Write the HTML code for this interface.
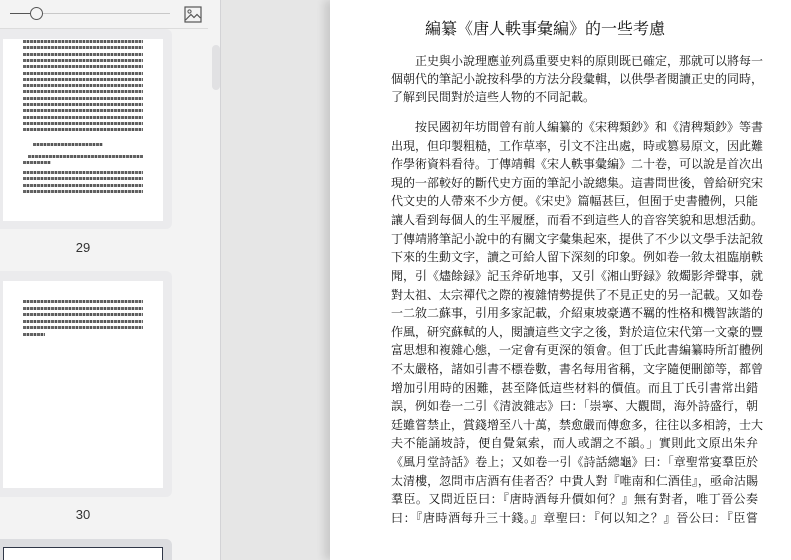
<!DOCTYPE html>
<html><head><meta charset="utf-8"><style>
*{margin:0;padding:0;box-sizing:border-box}
html{width:791px;height:560px;overflow:hidden}
body{width:791px;height:560px;overflow:hidden;background:#e6e6e6;position:relative;font-family:"Liberation Serif","Noto Serif CJK SC","Noto Serif CJK TC",serif}
.side{position:absolute;left:0;top:0;width:221px;height:560px;background:#f3f3f3;border-right:1px solid #d3d3d6;overflow:hidden}
.card{position:absolute;left:0;width:172px;background:#ebebed;border-radius:0 6px 6px 0}
.pg{position:absolute;left:3px;width:160px;background:#fff}
.tl{position:absolute;height:3px;background:repeating-linear-gradient(90deg,#666 0 3px,#bbb 3px 4px,#555 4px 6px,#ccc 6px 7px)}
.lab{position:absolute;width:166px;text-align:center;font:13px "Liberation Sans",sans-serif;color:#333}
.page{position:absolute;left:330px;top:0;width:461px;height:560px;background:#fff;box-shadow:-6px 0 8px rgba(0,0,0,.12)}
.t{position:absolute;left:391px;width:367px;height:19px;font-size:12px;line-height:19px;color:#111;text-align:justify;text-align-last:justify;white-space:nowrap}
</style></head><body>
<div class="side">
 <div style="position:absolute;left:10px;top:13px;width:160px;height:1px;background:#c8c8c8"></div>
 <div style="position:absolute;left:10px;top:13px;width:22px;height:1px;background:#555"></div>
 <div style="position:absolute;left:30px;top:7px;width:13px;height:13px;border:1.5px solid #555;border-radius:50%;background:#f3f3f3"></div>
 <svg style="position:absolute;left:184px;top:6px" width="18" height="17" viewBox="0 0 18 17"><rect x="1" y="1" width="16" height="15" fill="none" stroke="#555" stroke-width="1.2"/><circle cx="5.5" cy="5.5" r="1.6" fill="none" stroke="#555"/><path d="M1.5 14 L7 8.5 L10 11.5 L13 8.5 L16.5 12" fill="none" stroke="#555" stroke-width="1.2"/></svg>
 <div style="position:absolute;left:0;top:28px;width:208px;height:1px;background:#dcdcdc"></div>
 <div style="position:absolute;left:212px;top:45px;width:8px;height:45px;border-radius:4px;background:#e1e1e3"></div>
 <div class="card" style="top:29px;height:200px"><div class="pg" style="top:10px;height:182px"></div></div>
 <div class="lab" style="top:240px">29</div>
 <div class="card" style="top:271px;height:226px"><div class="pg" style="top:10px;height:207px"></div></div>
 <div class="lab" style="top:507px">30</div>
 <div class="card" style="top:539px;height:30px;background:#dcdde0"><div class="pg" style="top:8px;height:40px;border:1.5px solid #2f3747"></div></div>
 <div id="th"></div>
</div>
<div class="page"></div>
<div style="position:absolute;left:330px;top:18px;width:430px;text-align:center;font-size:16px;line-height:24px;color:#111">編纂《唐人軼事彙編》的一些考慮</div>
<div class="t" style="top:52px;padding-left:24px">正史與小說理應並列爲重要史料的原則既已確定，那就可以將每一</div>
<div class="t" style="top:70px">個朝代的筆記小說按科學的方法分段彙輯，以供學者閱讀正史的同時，</div>
<div class="t" style="top:88px;text-align-last:left">了解到民間對於這些人物的不同記載。</div>
<div class="t" style="top:118px;padding-left:24px">按民國初年坊間曾有前人編纂的《宋稗類鈔》和《清稗類鈔》等書</div>
<div class="t" style="top:137px">出現，但印製粗糙，工作草率，引文不注出處，時或篡易原文，因此難</div>
<div class="t" style="top:155px">作學術資料看待。丁傳靖輯《宋人軼事彙編》二十卷，可以說是首次出</div>
<div class="t" style="top:174px">現的一部較好的斷代史方面的筆記小說總集。這書問世後，曾給研究宋</div>
<div class="t" style="top:192px">代文史的人帶來不少方便。《宋史》篇幅甚巨，但囿于史書體例，只能</div>
<div class="t" style="top:211px">讓人看到每個人的生平履歷，而看不到這些人的音容笑貌和思想活動。</div>
<div class="t" style="top:230px">丁傳靖將筆記小說中的有關文字彙集起來，提供了不少以文學手法記敘</div>
<div class="t" style="top:248px">下來的生動文字，讀之可給人留下深刻的印象。例如卷一敘太祖臨崩軼</div>
<div class="t" style="top:267px">聞，引《燼餘録》記玉斧斫地事，又引《湘山野録》敘燭影斧聲事，就</div>
<div class="t" style="top:286px">對太祖、太宗禪代之際的複雜情勢提供了不見正史的另一記載。又如卷</div>
<div class="t" style="top:304px">一二敘二蘇事，引用多家記載，介紹東坡豪邁不羈的性格和機智詼諧的</div>
<div class="t" style="top:323px">作風，研究蘇軾的人，閱讀這些文字之後，對於這位宋代第一文豪的豐</div>
<div class="t" style="top:341px">富思想和複雜心態，一定會有更深的領會。但丁氏此書編纂時所訂體例</div>
<div class="t" style="top:360px">不太嚴格，諸如引書不標卷數，書名每用省稱，文字隨便刪節等，都曾</div>
<div class="t" style="top:379px">增加引用時的困難，甚至降低這些材料的價值。而且丁氏引書常出錯</div>
<div class="t" style="top:397px">誤，例如卷一二引《清波雜志》曰：「崇寧、大觀間，海外詩盛行，朝</div>
<div class="t" style="top:416px">廷雖嘗禁止，賞錢增至八十萬，禁愈嚴而傳愈多，往往以多相誇，士大</div>
<div class="t" style="top:434px">夫不能誦坡詩，便自覺氣索，而人或謂之不韻。」實則此文原出朱弁</div>
<div class="t" style="top:453px">《風月堂詩話》卷上；又如卷一引《詩話總龜》曰：「章聖常宴羣臣於</div>
<div class="t" style="top:472px">太清樓，忽問市店酒有佳者否？中貴人對『唯南和仁酒佳』，亟命沽賜</div>
<div class="t" style="top:490px">羣臣。又問近臣曰：『唐時酒每升價如何？』無有對者，唯丁晉公奏</div>
<div class="t" style="top:509px">曰：『唐時酒每升三十錢。』章聖曰：『何以知之？』晉公曰：『臣嘗</div>
<script>
var h='',y;
for(y=40;y<=134;y+=6.3)h+='<div class="tl" style="left:23px;top:'+y+'px;width:120px"></div>';
h+='<div class="tl" style="left:33px;top:143px;width:70px"></div>';
h+='<div class="tl" style="left:28px;top:155px;width:115px"></div><div class="tl" style="left:23px;top:161px;width:28px"></div>';
for(y=171;y<=193;y+=6.3)h+='<div class="tl" style="left:23px;top:'+y+'px;width:'+(y>190?105:120)+'px"></div>';
for(y=300;y<=333;y+=6.5)h+='<div class="tl" style="left:23px;top:'+y+'px;width:'+(y>330?22:120)+'px"></div>';
document.getElementById('th').innerHTML=h;
</script>
</body></html>
